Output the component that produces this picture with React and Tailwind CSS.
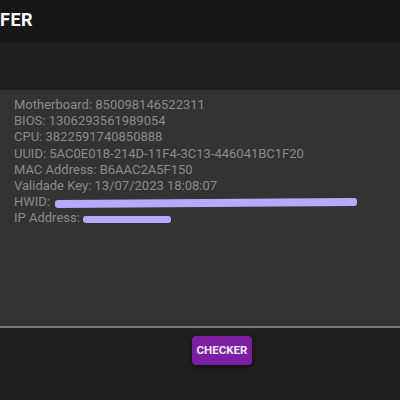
export default function App() {
  const rows = [
    ["Motherboard", "850098146522311"],
    ["BIOS", "1306293561989054"],
    ["CPU", "3822591740850888"],
    ["UUID", "5AC0E018-214D-11F4-3C13-446041BC1F20"],
    ["MAC Address", "B6AAC2A5F150"],
    ["Validade Key", "13/07/2023 18:08:07"],
  ];
  return (
    <div className="w-[400px] h-[400px] overflow-hidden bg-[#1d1d1d] flex flex-col" style={{ fontFamily: "Roboto, 'Liberation Sans', sans-serif" }}>
      <div className="h-[42px] shrink-0 bg-[#171717] flex items-center">
        <span className="text-white font-bold text-[18px] tracking-[0.5px] leading-none -mt-[2px]">FER</span>
      </div>
      <div className="h-[48px] shrink-0 bg-[#1f1f1f]" />
      <div className="h-[238px] shrink-0 bg-[#333333] border-b-2 border-[#7a7a7a] pl-[14px] pt-[7px] text-[13px] leading-[16.2px] text-[#8b8b8b]">
        {rows.map(([k, v]) => (
          <div key={k}>{k}: {v}</div>
        ))}
        <div className="flex items-center">
          <span>HWID:</span>
          <span className="ml-[5px] inline-block w-[302px] h-[8px] mt-[1px] rounded-[3px] bg-[#b9a8fb] -rotate-[0.4deg]" />
        </div>
        <div className="flex items-center">
          <span>IP Address:</span>
          <span className="ml-[3px] inline-block w-[88px] h-[7px] mt-[2px] rounded-[3px] bg-[#b9a8fb]" />
        </div>
      </div>
      <div className="flex-1 bg-[#1e1e1e]">
        <button className="ml-[192px] mt-[8px] w-[60px] h-[29px] rounded-[4px] bg-[#7b1fa2] text-white/90 font-bold text-[11.5px] shadow-[0_2px_4px_rgba(0,0,0,0.5)]">
          CHECKER
        </button>
      </div>
    </div>
  );
}
